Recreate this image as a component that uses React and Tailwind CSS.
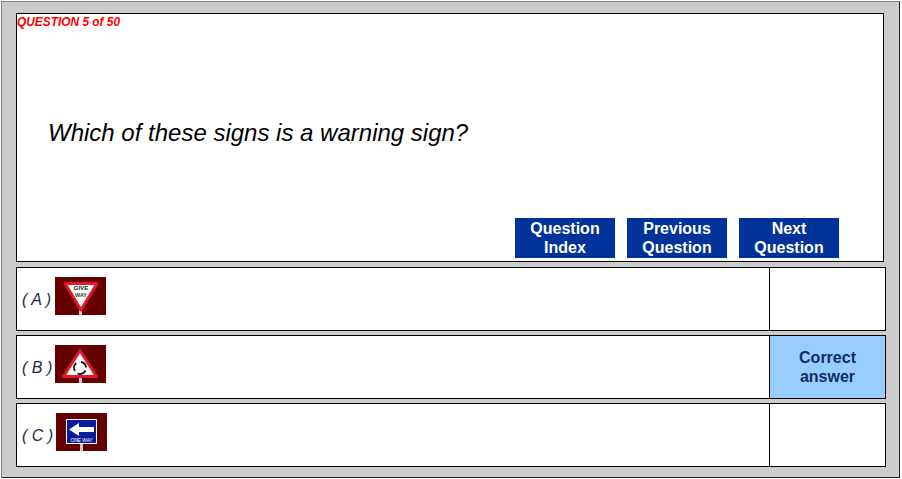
const font = { fontFamily: '"Liberation Sans", Arial, sans-serif' };

function SignBg({ children }) {
  return (
    <svg width="51" height="38" viewBox="0 0 51 38" className="block">
      <rect width="51" height="38" fill="#660000" />
      <rect x="24" y="30" width="3" height="8" fill="#c8c8c8" />
      {children}
    </svg>
  );
}

function GiveWay() {
  return (
    <SignBg>
      <path d="M10 6.5H42L26 33Z" fill="#fff" stroke="#e0182a" strokeWidth="3" strokeLinejoin="round" />
      <text x="26" y="13.3" textAnchor="middle" fontSize="6" fontWeight="700" fill="#222" fontFamily="Liberation Sans" textLength="15" lengthAdjust="spacingAndGlyphs">GIVE</text>
      <text x="26" y="20.3" textAnchor="middle" fontSize="6" fontWeight="700" fill="#333" fontFamily="Liberation Sans" textLength="12" lengthAdjust="spacingAndGlyphs">WAY</text>
    </SignBg>
  );
}

function Roundabout() {
  return (
    <SignBg>
      <path d="M25 5.5L41.5 31.5H8.5Z" fill="#fff" stroke="#e0182a" strokeWidth="3" strokeLinejoin="round" />
      <path d="M21.3 18A6 6 0 0 0 20 26M22.5 28.5A6 6 0 0 0 30.5 25.5M31 22.5A6 6 0 0 0 26 17" fill="none" stroke="#111" strokeWidth="1.9" />
    </SignBg>
  );
}

function OneWay() {
  return (
    <SignBg>
      <rect x="10" y="6" width="31" height="25" rx="1" fill="#fff" />
      <rect x="11" y="7" width="29" height="23" fill="#0a1a9c" />
      <path d="M38 14H23V10L13 16.5L23 23V19H38Z" fill="#fff" />
      <text x="25.5" y="28.5" textAnchor="middle" fontSize="5" fontStyle="italic" fill="#fff" fontFamily="Liberation Sans" textLength="22">ONE WAY</text>
    </SignBg>
  );
}

function Btn({ a, b }) {
  return (
    <div className="w-[100px] h-10 bg-[#003399] text-white font-bold text-base leading-[19px] text-center flex flex-col justify-center">
      <span>{a}</span>
      <span>{b}</span>
    </div>
  );
}

function Row({ label, sign, correct, wide }) {
  return (
    <div className="flex h-16 w-[870px] border border-black bg-white">
      <div className={`flex-1 flex pl-[5px] ${wide ? "gap-[5px]" : "gap-[4px]"}`}>
        <span className="self-center mt-[1px] italic text-base text-[#1a2a4a] w-[29px] whitespace-pre">{label}</span>
        <div className="pt-[9px]">{sign}</div>
      </div>
      <div className={`w-[116px] border-l border-black flex items-center justify-center text-center font-bold text-base leading-[19px] ${correct ? "bg-[#99ccff] text-[#0f2d66]" : ""}`}>
        {correct && <span>Correct<br />answer</span>}
      </div>
    </div>
  );
}

export default function App() {
  return (
    <div className="w-[902px] h-[479px] bg-white p-[1px] overflow-hidden">
      <div style={font} className="w-[899px] h-[477px] bg-[#cccccc] border border-[#808080] border-r-[#222222] border-b-[#222222]">
        <div className="pt-[11px] pl-[14px] flex flex-col gap-[5px]">
          <div className="w-[868px] h-[249px] border border-black bg-white flex flex-col">
            <div className="text-[11.9px] font-bold italic text-[#ff0000] leading-[16px]">QUESTION 5 of 50</div>
            <div className="pl-[31px] pt-[88px] text-2xl italic text-black leading-[30px]">Which of these signs is a warning sign?</div>
            <div className="mt-auto pb-[3px] pl-[498px] flex gap-3">
              <Btn a="Question" b="Index" />
              <Btn a="Previous" b="Question" />
              <Btn a="Next" b="Question" />
            </div>
          </div>
          <div className="w-[870px] flex flex-col gap-[4px]">
            <Row label="( A )" sign={<GiveWay />} />
            <Row label="( B )" sign={<Roundabout />} correct />
            <Row label="( C )" sign={<OneWay />} wide />
          </div>
        </div>
      </div>
    </div>
  );
}
